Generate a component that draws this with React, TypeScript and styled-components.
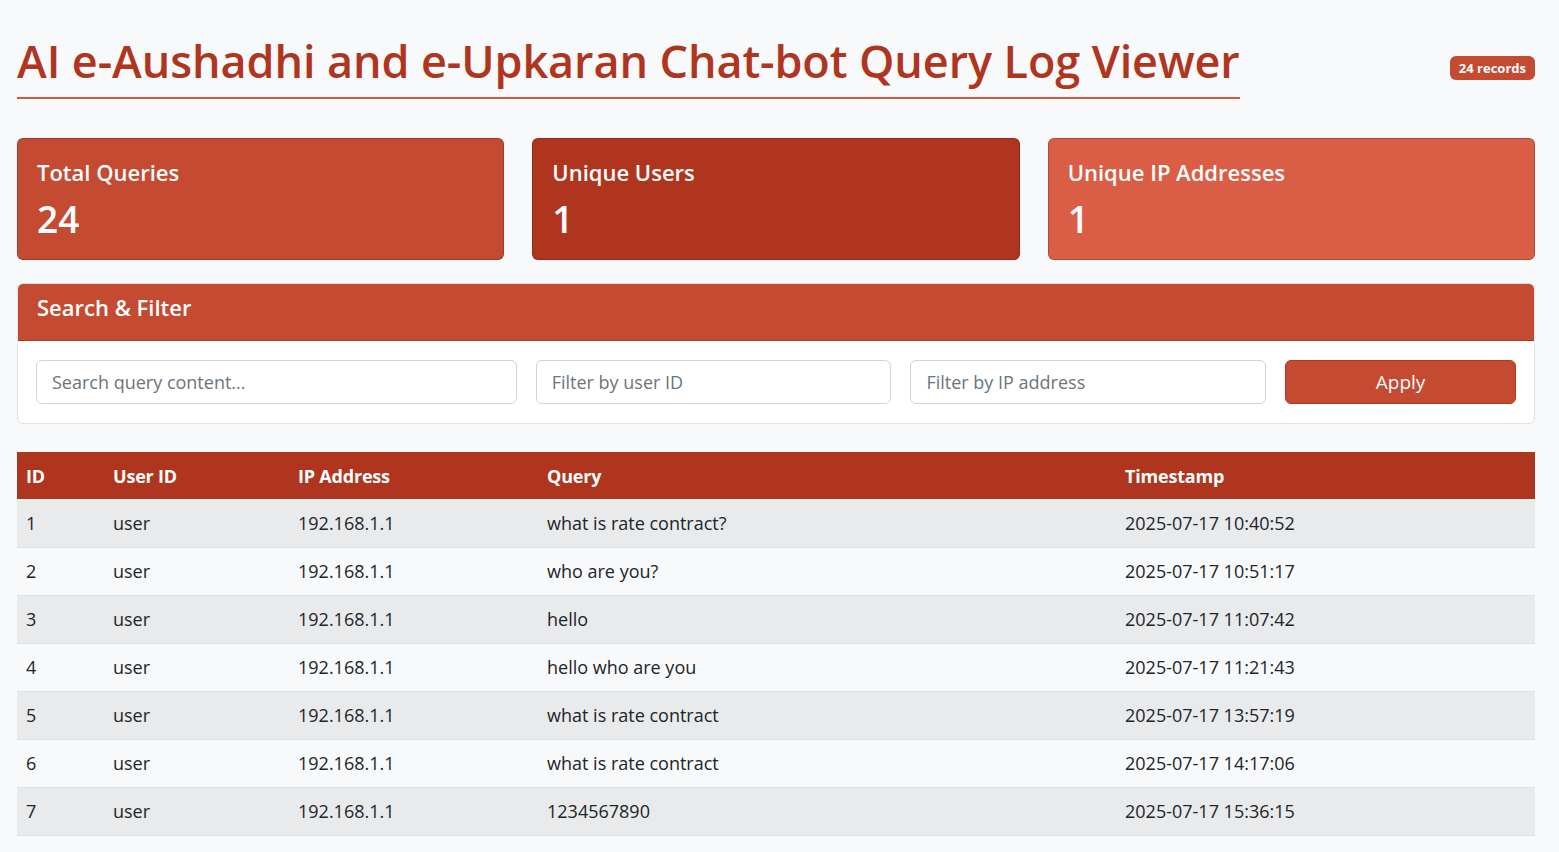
import React from "react";
import styled, { createGlobalStyle } from "styled-components";

const GlobalStyle = createGlobalStyle`
  html, body { margin: 0; padding: 0; background: #f8f9fa; }
  body { font-family: "Open Sans", "Noto Sans", "Liberation Sans", sans-serif; color: #212529; }
  * { box-sizing: border-box; }
`;

const Page = styled.div`
  padding: 31px 24px 20px 17px;
  display: flex;
  flex-direction: column;
`;

const Header = styled.header`
  display: flex;
  align-items: center;
  justify-content: space-between;
  margin-bottom: 39px;
`;

const Title = styled.h1`
  margin: 0;
  font-size: 45px;
  font-weight: 600;
  line-height: 60px;
  color: #b0351e;
  padding-bottom: 6px;
  border-bottom: 2px solid #d35a41;
  letter-spacing: -0.1px;
`;

const Badge = styled.span`
  background: #c44a31;
  color: #fff;
  font-size: 13px;
  font-weight: 700;
  height: 24px;
  padding: 0 9px;
  border-radius: 6px;
  display: inline-flex;
  align-items: center;
  margin-top: 6px;
`;

const StatsRow = styled.div`
  display: grid;
  grid-template-columns: repeat(3, 1fr);
  gap: 28px;
  margin-bottom: 23px;
`;

const StatCard = styled.div<{ $bg: string }>`
  background: ${(p) => p.$bg};
  border: 1px solid rgba(0, 0, 0, 0.18);
  border-radius: 6px;
  height: 122px;
  padding: 17px 19px;
  color: #fff;
  display: flex;
  flex-direction: column;
`;

const StatLabel = styled.div`
  font-size: 22px;
  font-weight: 600;
  line-height: 32px;
  margin-bottom: 7px;
`;

const StatValue = styled.div`
  font-size: 37px;
  font-weight: 600;
  line-height: 48px;
`;

const FilterCard = styled.section`
  background: #fff;
  border: 1px solid #dee2e6;
  border-radius: 6px;
  overflow: hidden;
  margin-bottom: 28px;
`;

const FilterHeader = styled.div`
  background: #c44a31;
  color: #fff;
  height: 57px;
  padding: 7px 19px 0;
  display: flex;
  align-items: flex-start;
  border-bottom: 1px solid #a9381f;
  font-size: 22px;
  line-height: 32px;
  font-weight: 600;
`;

const FilterBody = styled.div`
  padding: 19px 18px 19px 18px;
  display: grid;
  grid-template-columns:
    calc((100% + 19px) * 4 / 12 - 19px)
    calc((100% + 19px) * 3 / 12 - 19px)
    calc((100% + 19px) * 3 / 12 - 19px)
    calc((100% + 19px) * 2 / 12 - 19px);
  column-gap: 19px;
`;

const Input = styled.input`
  height: 44px;
  width: 100%;
  border: 1px solid #ced4da;
  border-radius: 6px;
  padding: 0 15px;
  font-family: inherit;
  font-size: 18px;
  color: #212529;
  background: #fff;
  &::placeholder { color: #6c757d; }
`;

const Button = styled.button`
  height: 44px;
  width: 100%;
  border: 1px solid #b0391f;
  border-radius: 6px;
  background: #c44a31;
  color: #fff;
  font-family: inherit;
  font-size: 19px;
`;

const Table = styled.table`
  width: 100%;
  border-collapse: collapse;
  table-layout: fixed;
  font-size: 18px;
`;

const Th = styled.th<{ $w: number }>`
  width: ${(p) => p.$w}px;
  background: #b0351e;
  color: #fff;
  text-align: left;
  font-weight: 700;
  height: 47px;
  padding: 0 9px;
  font-size: 18px;
  letter-spacing: -0.2px;
`;

const Tr = styled.tr<{ $odd: boolean }>`
  background: ${(p) => (p.$odd ? "#e9eaec" : "#f8f9fa")};
  border-bottom: 1px solid #dee2e6;
`;

const Td = styled.td`
  height: 48px;
  padding: 0 9px;
  color: #212529;
  white-space: nowrap;
`;

const rows = [
  ["1", "user", "192.168.1.1", "what is rate contract?", "2025-07-17 10:40:52"],
  ["2", "user", "192.168.1.1", "who are you?", "2025-07-17 10:51:17"],
  ["3", "user", "192.168.1.1", "hello", "2025-07-17 11:07:42"],
  ["4", "user", "192.168.1.1", "hello who are you", "2025-07-17 11:21:43"],
  ["5", "user", "192.168.1.1", "what is rate contract", "2025-07-17 13:57:19"],
  ["6", "user", "192.168.1.1", "what is rate contract", "2025-07-17 14:17:06"],
  ["7", "user", "192.168.1.1", "1234567890", "2025-07-17 15:36:15"],
];

const columns: [string, number][] = [
  ["ID", 87],
  ["User ID", 185],
  ["IP Address", 249],
  ["Query", 578],
  ["Timestamp", 419],
];

export default function App() {
  return (
    <>
      <GlobalStyle />
      <Page>
        <Header>
          <Title>AI e-Aushadhi and e-Upkaran Chat-bot Query Log Viewer</Title>
          <Badge>24 records</Badge>
        </Header>
        <StatsRow>
          <StatCard $bg="#c44a31">
            <StatLabel>Total Queries</StatLabel>
            <StatValue>24</StatValue>
          </StatCard>
          <StatCard $bg="#b0351e">
            <StatLabel>Unique Users</StatLabel>
            <StatValue>1</StatValue>
          </StatCard>
          <StatCard $bg="#da5d45">
            <StatLabel>Unique IP Addresses</StatLabel>
            <StatValue>1</StatValue>
          </StatCard>
        </StatsRow>
        <FilterCard>
          <FilterHeader>Search &amp; Filter</FilterHeader>
          <FilterBody>
            <Input placeholder="Search query content..." />
            <Input placeholder="Filter by user ID" />
            <Input placeholder="Filter by IP address" />
            <Button>Apply</Button>
          </FilterBody>
        </FilterCard>
        <Table>
          <thead>
            <tr>
              {columns.map(([c, w]) => (
                <Th key={c} $w={w}>{c}</Th>
              ))}
            </tr>
          </thead>
          <tbody>
            {rows.map((r, i) => (
              <Tr key={r[0]} $odd={i % 2 === 0}>
                {r.map((c, j) => (
                  <Td key={j}>{c}</Td>
                ))}
              </Tr>
            ))}
          </tbody>
        </Table>
      </Page>
    </>
  );
}
